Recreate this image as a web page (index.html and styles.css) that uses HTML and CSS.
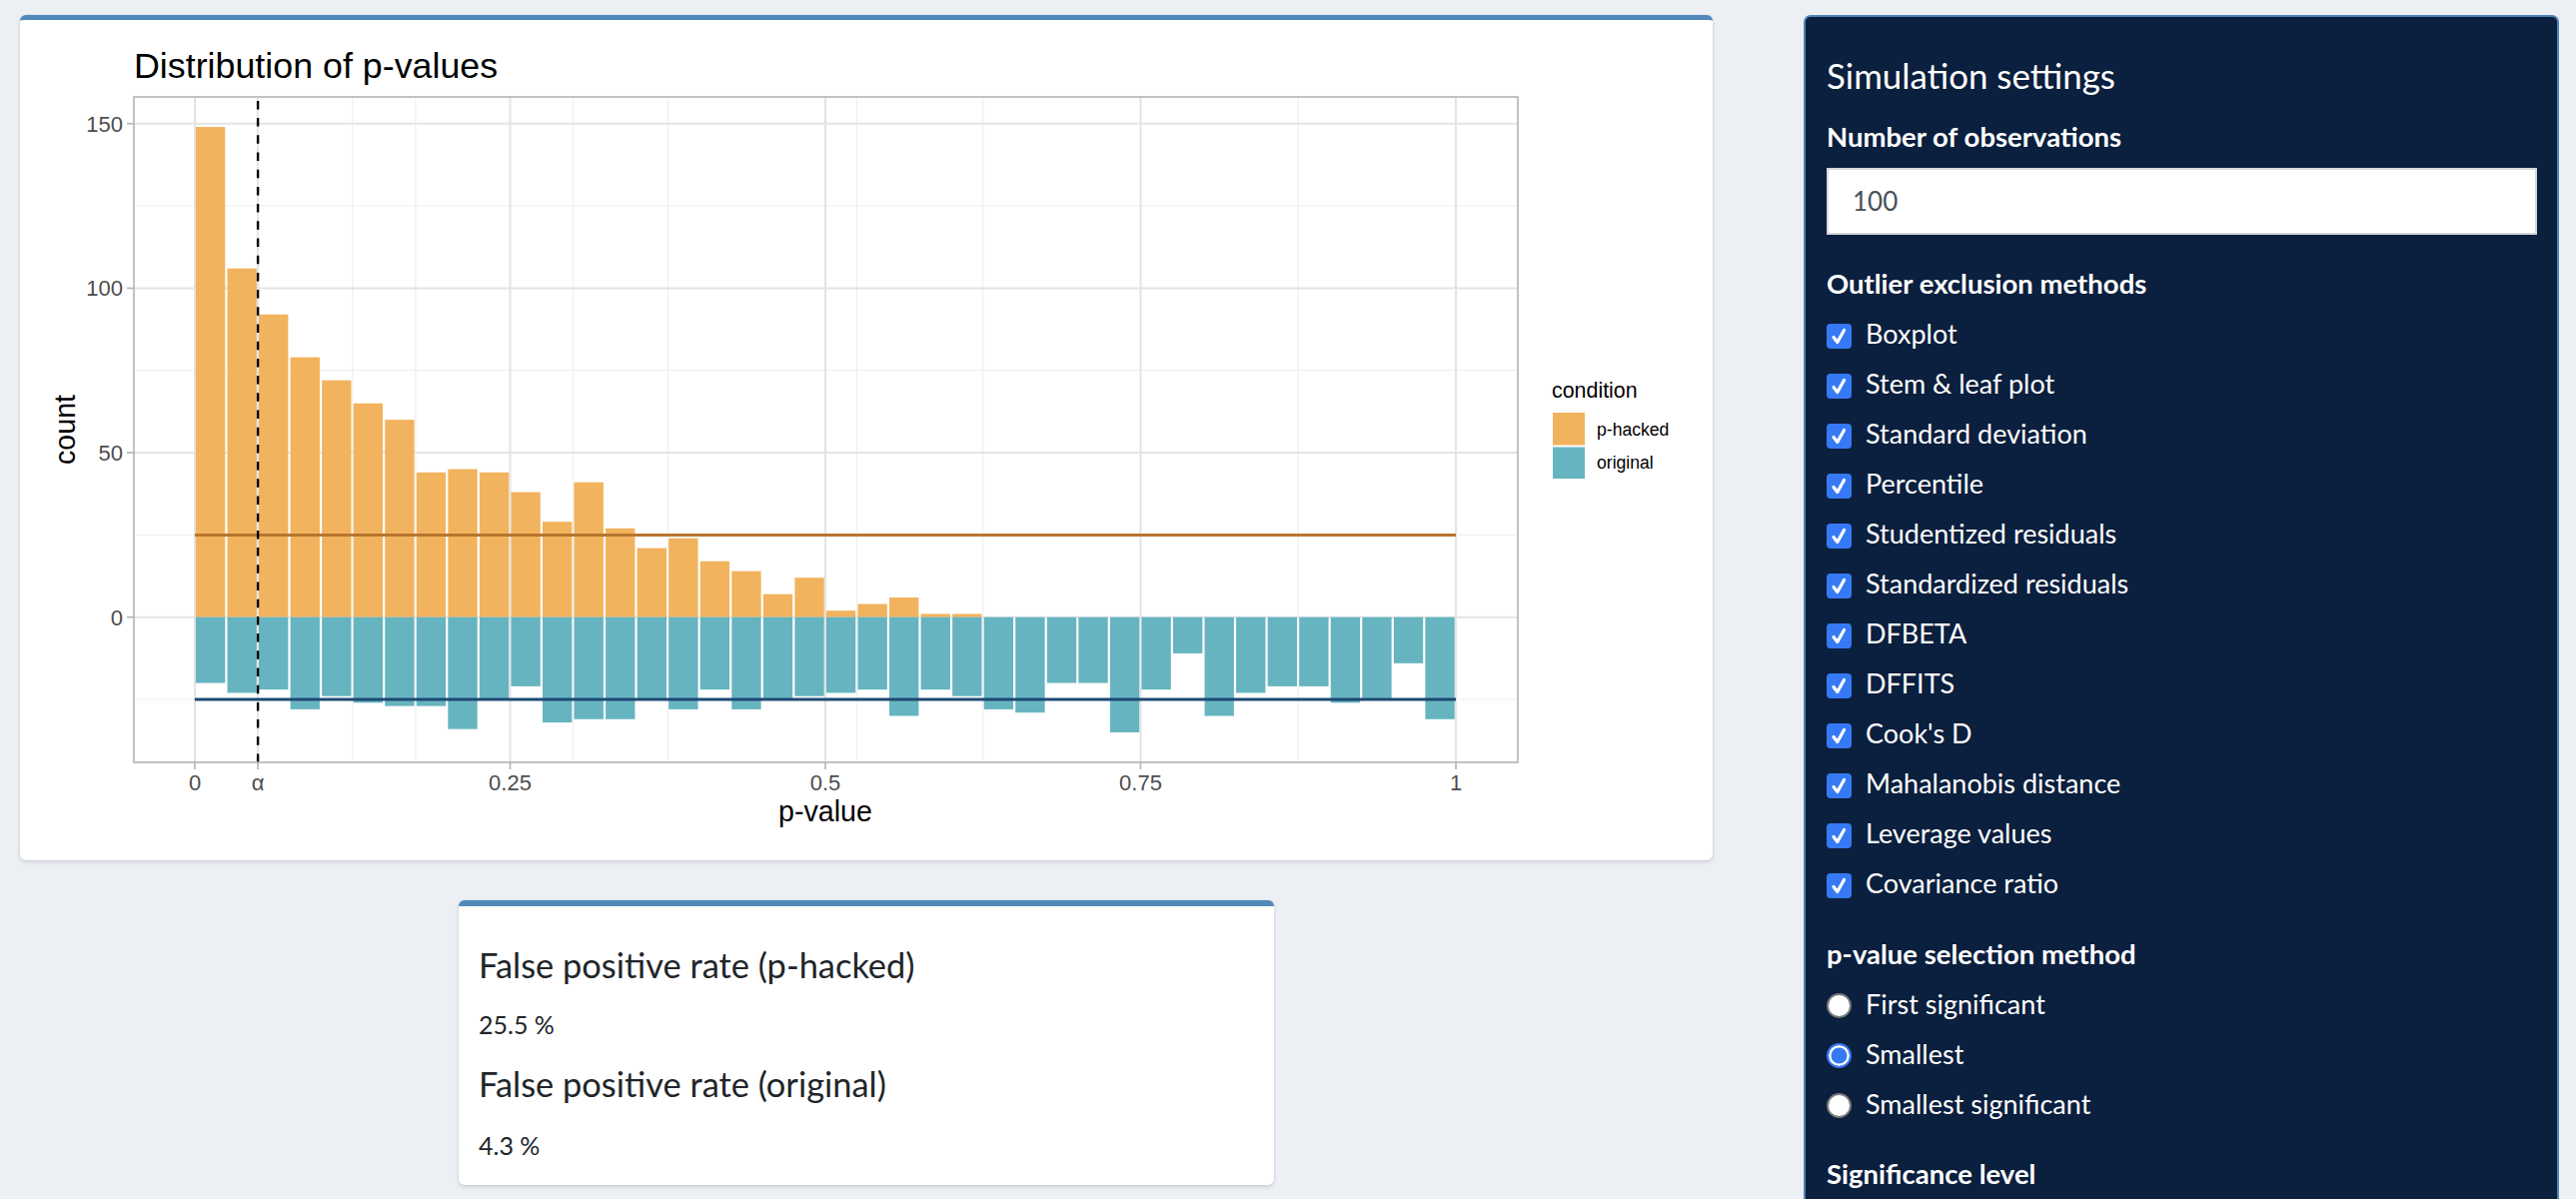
FILE: index.html
```html
<!DOCTYPE html>
<html lang="en">
<head>
<meta charset="utf-8">
<title>p-hacking simulation</title>
<link rel="stylesheet" href="styles.css">
</head>
<body>
<div class="layout">
  <main class="main-col">
    <section class="card plot-card">
      <svg class="plot" width="1694" height="841" viewBox="0 0 1694 841" xmlns="http://www.w3.org/2000/svg">
        <g transform="translate(-20 -20)">
          <!-- minor grid -->
          <g class="grid-minor">
            <line x1="134" x2="1519" y1="206" y2="206"/>
            <line x1="134" x2="1519" y1="370.7" y2="370.7"/>
            <line x1="134" x2="1519" y1="535.4" y2="535.4"/>
            <line x1="134" x2="1519" y1="700" y2="700"/>
            <line x1="352.75" x2="352.75" y1="97" y2="763"/>
            <line x1="415.85" x2="415.85" y1="97" y2="763"/>
            <line x1="573.6" x2="573.6" y1="97" y2="763"/>
            <line x1="668.25" x2="668.25" y1="97" y2="763"/>
            <line x1="857.55" x2="857.55" y1="97" y2="763"/>
            <line x1="983.75" x2="983.75" y1="97" y2="763"/>
            <line x1="1299.25" x2="1299.25" y1="97" y2="763"/>
          </g>
          <!-- major grid -->
          <g class="grid-major">
            <line x1="134" x2="1519" y1="123.7" y2="123.7"/>
            <line x1="134" x2="1519" y1="288.4" y2="288.4"/>
            <line x1="134" x2="1519" y1="453.05" y2="453.05"/>
            <line x1="134" x2="1519" y1="617.7" y2="617.7"/>
            <line x1="195" x2="195" y1="97" y2="763"/>
            <line x1="258.1" x2="258.1" y1="97" y2="763"/>
            <line x1="510.5" x2="510.5" y1="97" y2="763"/>
            <line x1="826" x2="826" y1="97" y2="763"/>
            <line x1="1141.5" x2="1141.5" y1="97" y2="763"/>
            <line x1="1457" x2="1457" y1="97" y2="763"/>
          </g>
          <!-- bars: x in bins, y in counts -->
          <g transform="translate(195 617.7) scale(31.55 -3.293)">
            <g class="bar-hacked">
              <rect x="0.03" y="0" width="0.93" height="149"/>
              <rect x="1.03" y="0" width="0.93" height="106"/>
              <rect x="2.03" y="0" width="0.93" height="92"/>
              <rect x="3.03" y="0" width="0.93" height="79"/>
              <rect x="4.03" y="0" width="0.93" height="72"/>
              <rect x="5.03" y="0" width="0.93" height="65"/>
              <rect x="6.03" y="0" width="0.93" height="60"/>
              <rect x="7.03" y="0" width="0.93" height="44"/>
              <rect x="8.03" y="0" width="0.93" height="45"/>
              <rect x="9.03" y="0" width="0.93" height="44"/>
              <rect x="10.03" y="0" width="0.93" height="38"/>
              <rect x="11.03" y="0" width="0.93" height="29"/>
              <rect x="12.03" y="0" width="0.93" height="41"/>
              <rect x="13.03" y="0" width="0.93" height="27"/>
              <rect x="14.03" y="0" width="0.93" height="21"/>
              <rect x="15.03" y="0" width="0.93" height="24"/>
              <rect x="16.03" y="0" width="0.93" height="17"/>
              <rect x="17.03" y="0" width="0.93" height="14"/>
              <rect x="18.03" y="0" width="0.93" height="7"/>
              <rect x="19.03" y="0" width="0.93" height="12"/>
              <rect x="20.03" y="0" width="0.93" height="2"/>
              <rect x="21.03" y="0" width="0.93" height="4"/>
              <rect x="22.03" y="0" width="0.93" height="6"/>
              <rect x="23.03" y="0" width="0.93" height="1"/>
              <rect x="24.03" y="0" width="0.93" height="1"/>
            </g>
            <g class="bar-original">
              <rect x="0.03" y="-20" width="0.93" height="20"/>
              <rect x="1.03" y="-23" width="0.93" height="23"/>
              <rect x="2.03" y="-22" width="0.93" height="22"/>
              <rect x="3.03" y="-28" width="0.93" height="28"/>
              <rect x="4.03" y="-24" width="0.93" height="24"/>
              <rect x="5.03" y="-26" width="0.93" height="26"/>
              <rect x="6.03" y="-27" width="0.93" height="27"/>
              <rect x="7.03" y="-27" width="0.93" height="27"/>
              <rect x="8.03" y="-34" width="0.93" height="34"/>
              <rect x="9.03" y="-25" width="0.93" height="25"/>
              <rect x="10.03" y="-21" width="0.93" height="21"/>
              <rect x="11.03" y="-32" width="0.93" height="32"/>
              <rect x="12.03" y="-31" width="0.93" height="31"/>
              <rect x="13.03" y="-31" width="0.93" height="31"/>
              <rect x="14.03" y="-25" width="0.93" height="25"/>
              <rect x="15.03" y="-28" width="0.93" height="28"/>
              <rect x="16.03" y="-22" width="0.93" height="22"/>
              <rect x="17.03" y="-28" width="0.93" height="28"/>
              <rect x="18.03" y="-25" width="0.93" height="25"/>
              <rect x="19.03" y="-24" width="0.93" height="24"/>
              <rect x="20.03" y="-23" width="0.93" height="23"/>
              <rect x="21.03" y="-22" width="0.93" height="22"/>
              <rect x="22.03" y="-30" width="0.93" height="30"/>
              <rect x="23.03" y="-22" width="0.93" height="22"/>
              <rect x="24.03" y="-24" width="0.93" height="24"/>
              <rect x="25.03" y="-28" width="0.93" height="28"/>
              <rect x="26.03" y="-29" width="0.93" height="29"/>
              <rect x="27.03" y="-20" width="0.93" height="20"/>
              <rect x="28.03" y="-20" width="0.93" height="20"/>
              <rect x="29.03" y="-35" width="0.93" height="35"/>
              <rect x="30.03" y="-22" width="0.93" height="22"/>
              <rect x="31.03" y="-11" width="0.93" height="11"/>
              <rect x="32.03" y="-30" width="0.93" height="30"/>
              <rect x="33.03" y="-23" width="0.93" height="23"/>
              <rect x="34.03" y="-21" width="0.93" height="21"/>
              <rect x="35.03" y="-21" width="0.93" height="21"/>
              <rect x="36.03" y="-26" width="0.93" height="26"/>
              <rect x="37.03" y="-25" width="0.93" height="25"/>
              <rect x="38.03" y="-14" width="0.93" height="14"/>
              <rect x="39.03" y="-31" width="0.93" height="31"/>
            </g>
          </g>
          <!-- reference lines -->
          <line class="ref-hacked" x1="195" x2="1457" y1="535.4" y2="535.4"/>
          <line class="ref-original" x1="195" x2="1457" y1="700" y2="700"/>
          <line class="alpha-line" x1="258.1" x2="258.1" y1="763" y2="97"/>
          <!-- panel border -->
          <rect class="panel-border" x="134" y="97" width="1385" height="666"/>
          <!-- ticks -->
          <g class="ticks">
            <line x1="127" x2="134" y1="123.7" y2="123.7"/>
            <line x1="127" x2="134" y1="288.4" y2="288.4"/>
            <line x1="127" x2="134" y1="453.05" y2="453.05"/>
            <line x1="127" x2="134" y1="617.7" y2="617.7"/>
            <line x1="195" x2="195" y1="763" y2="770"/>
            <line x1="258.1" x2="258.1" y1="763" y2="770"/>
            <line x1="510.5" x2="510.5" y1="763" y2="770"/>
            <line x1="826" x2="826" y1="763" y2="770"/>
            <line x1="1141.5" x2="1141.5" y1="763" y2="770"/>
            <line x1="1457" x2="1457" y1="763" y2="770"/>
          </g>
          <!-- tick labels -->
          <g class="tick-label y-labels">
            <text x="123" y="131.5">150</text>
            <text x="123" y="296.2">100</text>
            <text x="123" y="460.9">50</text>
            <text x="123" y="625.5">0</text>
          </g>
          <g class="tick-label x-labels">
            <text x="195" y="791">0</text>
            <text x="258.1" y="791">α</text>
            <text x="510.5" y="791">0.25</text>
            <text x="826" y="791">0.5</text>
            <text x="1141.5" y="791">0.75</text>
            <text x="1457" y="791">1</text>
          </g>
          <!-- titles -->
          <text class="plot-title" x="134" y="78">Distribution of p-values</text>
          <text class="axis-title" x="826" y="822" text-anchor="middle">p-value</text>
          <text class="axis-title" transform="translate(75 430) rotate(-90)" text-anchor="middle">count</text>
          <!-- legend -->
          <text class="legend-title" x="1553" y="398">condition</text>
          <rect class="bar-hacked" x="1554" y="413" width="32" height="32.5"/>
          <rect class="bar-original" x="1554" y="447.5" width="32" height="31.5"/>
          <text class="legend-text" x="1598" y="435.7">p-hacked</text>
          <text class="legend-text" x="1598" y="468.5">original</text>
        </g>
      </svg>
    </section>

    <section class="card stats-card">
      <h4 class="stat-heading">False positive rate (p-hacked)</h4>
      <p class="stat-value">25.5 %</p>
      <h4 class="stat-heading second">False positive rate (original)</h4>
      <p class="stat-value">4.3 %</p>
    </section>
  </main>

  <aside class="sidebar">
    <h3 class="side-title">Simulation settings</h3>
    <label class="field-label" for="nobs">Number of observations</label>
    <input class="num-input" id="nobs" type="text" value="100">

    <div class="field-label group-label">Outlier exclusion methods</div>
    <ul class="options checks">
      <li><span class="cb"><svg viewBox="0 0 25 25"><path d="M7 13.5 L10.8 18.5 L17.5 6.5"/></svg></span>Boxplot</li>
      <li><span class="cb"><svg viewBox="0 0 25 25"><path d="M7 13.5 L10.8 18.5 L17.5 6.5"/></svg></span>Stem &amp; leaf plot</li>
      <li><span class="cb"><svg viewBox="0 0 25 25"><path d="M7 13.5 L10.8 18.5 L17.5 6.5"/></svg></span>Standard deviation</li>
      <li><span class="cb"><svg viewBox="0 0 25 25"><path d="M7 13.5 L10.8 18.5 L17.5 6.5"/></svg></span>Percentile</li>
      <li><span class="cb"><svg viewBox="0 0 25 25"><path d="M7 13.5 L10.8 18.5 L17.5 6.5"/></svg></span>Studentized residuals</li>
      <li><span class="cb"><svg viewBox="0 0 25 25"><path d="M7 13.5 L10.8 18.5 L17.5 6.5"/></svg></span>Standardized residuals</li>
      <li><span class="cb"><svg viewBox="0 0 25 25"><path d="M7 13.5 L10.8 18.5 L17.5 6.5"/></svg></span>DFBETA</li>
      <li><span class="cb"><svg viewBox="0 0 25 25"><path d="M7 13.5 L10.8 18.5 L17.5 6.5"/></svg></span>DFFITS</li>
      <li><span class="cb"><svg viewBox="0 0 25 25"><path d="M7 13.5 L10.8 18.5 L17.5 6.5"/></svg></span>Cook's D</li>
      <li><span class="cb"><svg viewBox="0 0 25 25"><path d="M7 13.5 L10.8 18.5 L17.5 6.5"/></svg></span>Mahalanobis distance</li>
      <li><span class="cb"><svg viewBox="0 0 25 25"><path d="M7 13.5 L10.8 18.5 L17.5 6.5"/></svg></span>Leverage values</li>
      <li><span class="cb"><svg viewBox="0 0 25 25"><path d="M7 13.5 L10.8 18.5 L17.5 6.5"/></svg></span>Covariance ratio</li>
    </ul>

    <div class="field-label group-label second">p-value selection method</div>
    <ul class="options radios">
      <li><span class="rb"></span>First significant</li>
      <li><span class="rb on"></span>Smallest</li>
      <li><span class="rb"></span>Smallest significant</li>
    </ul>

    <div class="field-label group-label second">Significance level</div>
  </aside>
</div>
</body>
</html>
```

FILE: styles.css
```css
html, body {
  margin: 0;
  height: 1200px;
  overflow: hidden;
  background: #ecf0f5;
}

body {
  font-family: "Lato", "Noto Sans", sans-serif;
  color: #212529;
}

.layout {
  display: flex;
  align-items: flex-start;
  gap: 91px;
  padding: 15px 17px 0 20px;
}

.main-col {
  width: 1694px;
  display: flex;
  flex-direction: column;
  align-items: center;
  gap: 40px;
}

.card {
  background: #ffffff;
  border-top: 5px solid #5089ba;
  border-radius: 6px;
  box-shadow: 0 0 2px rgba(0, 0, 0, 0.12), 0 2px 4px rgba(0, 0, 0, 0.12);
  box-sizing: border-box;
}

.plot-card {
  width: 1694px;
  height: 846px;
}

.plot {
  display: block;
  font-family: "Liberation Sans", Arial, sans-serif;
}

.grid-minor line {
  stroke: #efefef;
  stroke-width: 1.2;
}

.grid-major line {
  stroke: #e4e4e4;
  stroke-width: 2;
}

.bar-hacked { fill: #f2b35e; }
.bar-original { fill: #66b4c0; }

.ref-hacked {
  stroke: #b8752f;
  stroke-width: 3;
}

.ref-original {
  stroke: #1e4a74;
  stroke-width: 3;
}

.alpha-line {
  stroke: #000000;
  stroke-width: 2.4;
  stroke-dasharray: 8.5 8.7;
}

.panel-border {
  fill: none;
  stroke: #b3b3b3;
  stroke-width: 1.6;
}

.ticks line {
  stroke: #b3b3b3;
  stroke-width: 1.6;
}

.tick-label text {
  font-size: 22px;
  fill: #4d4d4d;
}

.y-labels text { text-anchor: end; }
.x-labels text { text-anchor: middle; }

.plot-title {
  font-size: 35.8px;
  fill: #000000;
}

.axis-title {
  font-size: 28.6px;
  fill: #000000;
}

.legend-title {
  font-size: 21.4px;
  fill: #000000;
}

.legend-text {
  font-size: 17.6px;
  fill: #000000;
}

/* stats card */
.stats-card {
  width: 816px;
  height: 285px;
  border-top-width: 6px;
  padding: 37.7px 20px 0 20px;
}

.stat-heading {
  margin: 0;
  font-size: 34.4px;
  line-height: 42px;
  font-weight: 400;
  color: #212529;
}

.stat-heading.second {
  margin-top: 23.4px;
}

.stat-value {
  margin: 23.6px 0 0 0;
  font-size: 25px;
  line-height: 30px;
}

.stat-heading.second + .stat-value {
  margin-top: 25.6px;
}

/* sidebar */
.sidebar {
  width: 756px;
  min-height: 1300px;
  box-sizing: border-box;
  background: #0b1f3e;
  border: 2px solid #4d83b5;
  border-radius: 7px;
  padding: 37.5px 20px 0 21px;
  color: #ffffff;
}

.side-title {
  margin: 0 0 24.8px 0;
  font-size: 34.9px;
  line-height: 42px;
  font-weight: 400;
}

.field-label {
  display: block;
  font-size: 27.5px;
  line-height: 32px;
  font-weight: 700;
}

.num-input {
  display: block;
  box-sizing: border-box;
  width: 711px;
  height: 67px;
  margin: 14.6px 0 0 0;
  padding: 0 24px;
  border: 2px solid #d3d6da;
  border-radius: 0;
  background: #ffffff;
  font-family: inherit;
  font-size: 26px;
  color: #495057;
  outline: none;
}

.group-label {
  margin-top: 33.4px;
}

.group-label.second {
  margin-top: 27px;
}

.options {
  list-style: none;
  margin: 11.6px 0 0 0;
  padding: 0;
}

.options li {
  display: flex;
  align-items: flex-start;
  box-sizing: border-box;
  height: 50px;
  padding-top: 6.5px;
  font-size: 27px;
  line-height: 32px;
}

.cb {
  width: 25px;
  height: 25px;
  margin: 5.5px 14px 0 0;
  border-radius: 4px;
  background: #3679f5;
  flex: none;
}

.cb svg {
  display: block;
  width: 25px;
  height: 25px;
}

.cb path {
  fill: none;
  stroke: #ffffff;
  stroke-width: 3.2;
  stroke-linecap: round;
  stroke-linejoin: round;
}

.rb {
  width: 25px;
  height: 25px;
  margin: 5.5px 14px 0 0;
  box-sizing: border-box;
  border-radius: 50%;
  background: #ffffff;
  border: 2px solid #7a7a7a;
  flex: none;
}

.rb.on {
  background: #3679f5;
  border: 2px solid #3679f5;
  box-shadow: inset 0 0 0 2.5px #ffffff;
}
```
